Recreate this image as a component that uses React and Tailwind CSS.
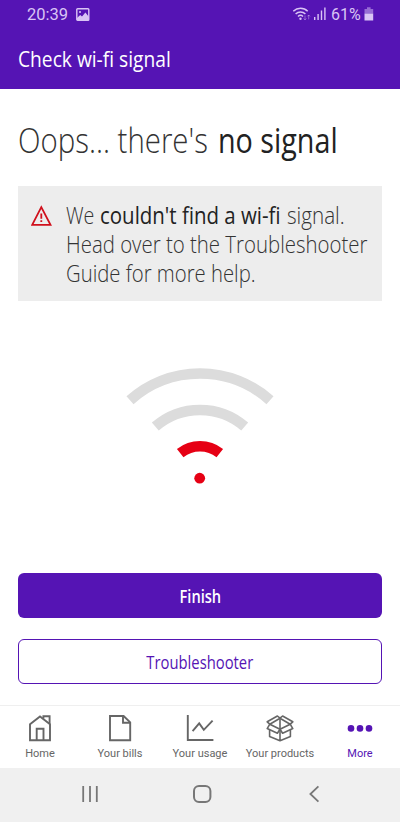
import React from 'react';

const NavIcon = ({ children }) => (
  <svg
    className="h-7 w-7"
    viewBox="0 0 28 28"
    fill="none"
    stroke="currentColor"
    strokeWidth="1.9"
  >
    {children}
  </svg>
);

const tabs = [
  {
    id: 'home',
    label: 'Home',
    icon: (
      <NavIcon>
        <path d="M4 10.2 14 2.4l10 7.8v16H4z" />
        <path d="M10.7 26V14.8h6.8V26M17.4 4.4V2.2h6.2v7.6" />
      </NavIcon>
    ),
  },
  {
    id: 'bills',
    label: 'Your bills',
    icon: (
      <NavIcon>
        <path d="M4 2h13.6l6.6 6.4v17.8H4z" />
        <path d="M17 2v6.8h7" />
      </NavIcon>
    ),
  },
  {
    id: 'usage',
    label: 'Your usage',
    icon: (
      <NavIcon>
        <path d="M1.8 1v25H27.4" />
        <path d="M6.6 17.2l6.6-7.8 4.6 6.4 8.8-9.2" />
      </NavIcon>
    ),
  },
  {
    id: 'products',
    label: 'Your products',
    icon: (
      <NavIcon>
        <g strokeWidth="1.6" strokeLinejoin="round">
          <path d="M14 4.2 11.4 2 1.2 7.8l2.6 2.4zM14 4.2 16.6 2l10.2 5.8-2.6 2.4z" />
          <path d="M14 15.2 3.8 10.2l-2.6 4.4 10.2 4.6zM14 15.2l10.2-5 2.6 4.4-10.2 4.6z" />
          <path d="M3.6 16v6.4L14 26.8l10.4-4.4V16M14 4.2v22.6" />
        </g>
      </NavIcon>
    ),
  },
  {
    id: 'more',
    label: 'More',
    active: true,
    icon: (
      <NavIcon>
        <g fill="currentColor" stroke="none">
          <circle cx="5" cy="14.4" r="3.3" />
          <circle cx="14" cy="14.4" r="3.3" />
          <circle cx="23" cy="14.4" r="3.3" />
        </g>
      </NavIcon>
    ),
  },
];

const StatusBar = () => (
  <div className="flex h-7 items-center pl-[27px] pr-[26px] font-['Roboto',sans-serif] text-[16.5px] text-[#d9c4f5]">
    <span className="w-[42px] pt-[2px]">20:39</span>
    <svg className="ml-[7px] h-[13px] w-[14px]" viewBox="0 0 14 13">
      <rect x="0.8" y="0.8" width="12" height="11.4" rx="0.8" fill="none" stroke="currentColor" strokeWidth="1.4" />
      <path d="M1 10l3.2-3 1.8 1.6 3.4-4.2L13 9v3.2H1z" fill="currentColor" />
      <circle cx="4" cy="4" r="1" fill="currentColor" />
    </svg>

    <svg className="ml-auto h-[14px] w-[18px]" viewBox="0 0 18 14" fill="none" stroke="currentColor" strokeWidth="1.5">
      <path d="M0.3 4.2a10 10 0 0 1 14.4 0M2.6 7a7 7 0 0 1 9.8 0M5 9.5a3.6 3.6 0 0 1 5 0" />
      <circle cx="7.5" cy="11.8" r="1.2" fill="currentColor" stroke="none" />
      <path d="M12 8.5v4.4m-1.3-1.4 1.3 1.4 1.3-1.4M15.7 12.4V8m-1.3 1.4L15.7 8 17 9.4" strokeWidth="0.9" opacity="0.5" />
    </svg>
    <svg className="mb-[2px] ml-[3px] h-[13px] w-[12px]" viewBox="0 0 12 13" fill="currentColor">
      <path d="M0 10h1.4v3H0zM3.4 7h1.4v6H3.4zM6.8 3.6h1.4V13H6.8zM10.2 0.6h1.4V13h-1.4z" />
    </svg>
    <span className="ml-[5px] w-[31px] pt-[2px] text-[16px]">61%</span>
    <svg className="ml-[2px] h-[14px] w-[10px]" viewBox="0 0 10 14" fill="currentColor">
      <path d="M3 0.3h3.6v1.6h2.6v4.6H0.5V1.9H3z" opacity="0.5" />
      <path d="M0.5 6.5h8.7v7H0.5z" />
    </svg>
  </div>
);

const SignalGraphic = () => (
  <svg className="mx-auto h-[118px] w-[148px]" viewBox="0 0 148 118" fill="none" strokeWidth="10.6">
    <path d="M4 32.2A105 105 0 0 1 144 32.2" stroke="#dcdcdc" />
    <path d="M29.3 58.6A68.5 68.5 0 0 1 118.7 58.6" stroke="#dcdcdc" />
    <path d="M54.2 85.1A32.2 32.2 0 0 1 93.8 85.1" stroke="#e60014" />
    <circle cx="73.7" cy="110.2" r="5.4" fill="#e60014" />
  </svg>
);

const App = () => {
  return (
    <div className="flex h-[822px] w-[400px] flex-col overflow-hidden bg-white font-['Open_Sans',sans-serif] text-[#333]">
      <header className="h-[89px] bg-[#5514b4]">
        <StatusBar />
        <h1 className="ml-[18px] mt-[16px] w-max origin-left scale-x-[0.914] text-[21px] leading-[30px] text-white">
          Check wi-fi signal
        </h1>
      </header>

      <main className="flex flex-1 flex-col px-[18px]">
        <h2 className="mt-[30px] flex h-[42px] whitespace-nowrap text-[35px] font-light leading-[42px]">
          <span className="w-[200px]">
            <span className="inline-block origin-left scale-x-[0.84]">Oops... there's</span>
          </span>
          <span className="inline-block origin-left scale-x-[0.82] font-normal text-[#222]">no signal</span>
        </h2>

        <div className="mt-[25px] flex h-[115px] bg-[#ededed] pl-[13px] pt-[14px]">
          <svg className="mt-[5px] h-[22px] w-[21px] shrink-0" viewBox="0 0 21 22" fill="none" stroke="#d0101c" strokeWidth="1.8">
            <path d="M10.3 2.2 19.5 19.8H1.2z" />
            <path d="M10.3 8.4v5.4M10.3 15.2v1.8" />
          </svg>
          <div className="ml-[14px] whitespace-nowrap text-[24px] font-light leading-[29px]">
            <p className="flex">
              <span className="w-[34px] shrink-0">
                <span className="inline-block origin-left scale-x-[0.82]">We</span>
              </span>
              <span className="w-[187px] shrink-0">
                <span className="inline-block origin-left scale-x-[0.852] font-normal text-[#222]">
                  couldn't find a wi-fi
                </span>
              </span>
              <span className="inline-block origin-left scale-x-[0.86]">signal.</span>
            </p>
            <p className="w-max origin-left scale-x-[0.85]">Head over to the Troubleshooter</p>
            <p className="w-max origin-left scale-x-[0.845]">Guide for more help.</p>
          </div>
        </div>

        <div className="mt-[67px]">
          <SignalGraphic />
        </div>

        <div className="mt-auto flex flex-col gap-[21px] pb-[21px]">
          <button className="h-[45px] rounded-md bg-[#5514b4] text-[18.5px] font-semibold text-white">
            <span className="inline-block scale-x-[0.79]">Finish</span>
          </button>
          <button className="h-[45px] rounded-md border border-[#5514b4] text-[18.5px] text-[#5514b4]">
            <span className="inline-block scale-x-[0.8]">Troubleshooter</span>
          </button>
        </div>
      </main>

      <nav className="grid h-[63px] grid-cols-5 border-t border-[#efefef] font-['Roboto',sans-serif]">
        {tabs.map((tab) => (
          <a
            key={tab.id}
            className={`flex flex-col items-center pt-[8px] ${tab.active ? 'text-[#5514b4]' : 'text-[#666]'}`}
          >
            {tab.icon}
            <span className="mt-[5px] whitespace-nowrap text-[11px] leading-[14px]">{tab.label}</span>
          </a>
        ))}
      </nav>

      {/* Android system buttons */}
      <div className="flex h-[54px] items-center justify-between bg-[#f0f0f0] pb-[2px] pl-[81px] pr-[79px] text-[#777]">
        <svg className="h-[18px] w-[18px]" viewBox="0 0 18 18" stroke="currentColor" strokeWidth="1.8">
          <path d="M2.2 1v16M9 1v16M15.8 1v16" />
        </svg>
        <svg className="h-[20px] w-[20px]" viewBox="0 0 20 20" fill="none" stroke="currentColor" strokeWidth="2">
          <rect x="1" y="2" width="16.4" height="16" rx="5" />
        </svg>
        <svg className="h-[18px] w-[14px]" viewBox="0 0 14 18" fill="none" stroke="currentColor" strokeWidth="1.8">
          <path d="M11.4 1.4 3.4 9l8 7.6" />
        </svg>
      </div>
    </div>
  );
};

export default App;
